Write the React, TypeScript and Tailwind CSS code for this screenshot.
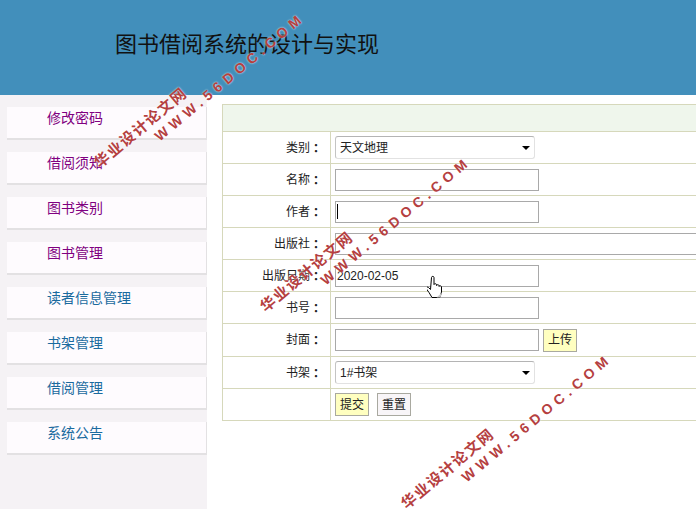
import React from "react";

const CJK = "font-['Liberation_Sans','Noto_Sans_CJK_SC',sans-serif]";

const MENU = [
  { label: "修改密码", color: "text-[#800080]" },
  { label: "借阅须知", color: "text-[#800080]" },
  { label: "图书类别", color: "text-[#800080]" },
  { label: "图书管理", color: "text-[#800080]" },
  { label: "读者信息管理", color: "text-[#1a6a9e]" },
  { label: "书架管理", color: "text-[#1a6a9e]" },
  { label: "借阅管理", color: "text-[#1a6a9e]" },
  { label: "系统公告", color: "text-[#1a6a9e]" },
];

function Row({ label, tall, children }: { label?: string; tall?: boolean; children?: React.ReactNode }) {
  return (
    <div className={`flex border-b border-[#d6d8bb] ${tall ? "h-[33px]" : "h-[32px]"}`}>
      <div className="flex w-[108px] shrink-0 items-center justify-end border-r border-[#d6d8bb] pr-[8px] text-[12px] text-[#222]">
        {label}
        {label && <span className="font-['Noto_Sans_CJK_TC',sans-serif] font-bold">：</span>}
      </div>
      <div className="flex flex-1 items-center gap-[4px] pl-[4px]">{children}</div>
    </div>
  );
}

function TextInput({ value, wide, caret }: { value?: string; wide?: boolean; caret?: boolean }) {
  return (
    <div
      className={`flex h-[22px] shrink-0 items-center border border-[#a9a9a9] bg-white pl-[1px] text-[12px] text-[#222] ${
        wide ? "w-[400px]" : "w-[204px]"
      }`}
    >
      {caret && <span className="h-[15px] w-[1px] bg-black" />}
      {value}
    </div>
  );
}

function SelectBox({ value }: { value: string }) {
  return (
    <div className="relative flex h-[23px] w-[200px] items-center rounded-[3px] border border-[#e2e2e2] border-l-[#c4c4c4] border-t-[#b4b4b4] bg-white pl-[4px] text-[12px] text-[#222]">
      {value}
      <span className="absolute right-[4px] top-[9px] h-0 w-0 border-x-[4px] border-t-[4px] border-x-transparent border-t-black" />
    </div>
  );
}

function Btn({ label, plain }: { label: string; plain?: boolean }) {
  return (
    <div
      className={`flex h-[23px] w-[34px] items-center justify-center border border-[#a9a9a0] text-[12px] text-[#222] ${
        plain ? "ml-[4px] bg-[#f8f5f8]" : "bg-[#ffffc0]"
      }`}
    >
      {label}
    </div>
  );
}

function Watermark({ line1, line2 }: { line1: string; line2: string }) {
  return (
    <>
      <div className={`pointer-events-none absolute -translate-x-1/2 -translate-y-1/2 rotate-[-40deg] whitespace-nowrap text-[15px] font-bold tracking-[1.5px] text-[#b5403f] [text-shadow:0_0_2px_#fff] ${line1}`}>
        华业设计论文网
      </div>
      <div className={`pointer-events-none absolute -translate-x-1/2 -translate-y-1/2 rotate-[-40deg] whitespace-nowrap text-[14px] font-bold tracking-[5px] text-[#b5403f] [text-shadow:0_0_2px_#fff] ${line2}`}>
        WWW.56DOC.COM
      </div>
    </>
  );
}

export default function App() {
  return (
    <div className={`relative h-[509px] w-[696px] overflow-hidden bg-white ${CJK}`}>
      <header className="flex h-[95px] items-center bg-[#428fbb] pb-[6px] pl-[115px] text-[22px] text-[#111]">
        图书借阅系统的设计与实现
      </header>

      <div className="flex h-[414px]">
        <aside className="w-[207px] shrink-0 bg-[#f5f2f5] pl-[7px] pt-[12px]">
          {MENU.map((item) => (
            <div
              key={item.label}
              className={`mb-[12px] h-[33px] border-b-2 border-r border-[#e3e1e3] bg-[#fefbfe] pl-[40px] pt-[1px] text-[14px] leading-[20px] ${item.color}`}
            >
              {item.label}
            </div>
          ))}
        </aside>

        <main className="w-[489px] shrink-0 pl-[15px] pt-[9px]">
          <div className="w-[500px] border-l border-t border-[#d6d8bb]">
            <div className="h-[27px] border-b border-[#d6d8bb] bg-[#eff6ec]" />
            <Row label="类别"><SelectBox value="天文地理" /></Row>
            <Row label="名称"><TextInput /></Row>
            <Row label="作者"><TextInput caret /></Row>
            <Row label="出版社"><TextInput wide /></Row>
            <Row label="出版日期"><TextInput value="2020-02-05" /></Row>
            <Row label="书号"><TextInput /></Row>
            <Row label="封面" tall><TextInput /><Btn label="上传" /></Row>
            <Row label="书架"><SelectBox value="1#书架" /></Row>
            <Row>
              <Btn label="提交" />
              <Btn label="重置" plain />
            </Row>
          </div>
        </main>
      </div>

      {/* mouse pointer */}
      <svg className="absolute left-[427px] top-[275px]" width="18" height="24" viewBox="0 0 18 24">
        <path
          d="M4.5 2.5c0-1.5 2.5-1.5 2.5 0v7c0-1 2.5-1 2.5 0v1c0-1 2.5-1 2.5 0v1c0-1 2.5-1 2.5 .5 v5l-1.5 5.5h-8l-3-5-2.5-3.5c-.8-1.5 1-2.5 2-1.5l2 2z"
          fill="#fff"
          stroke="#000"
          strokeWidth="1"
        />
        <path d="M15 17.5v-.5l-1.5 5.5h-4z" fill="#c8c8c8" />
      </svg>

      <Watermark line1="left-[141px] top-[128px]" line2="left-[230px] top-[77px]" />
      <Watermark line1="left-[307px] top-[272px]" line2="left-[396px] top-[221px]" />
      <Watermark line1="left-[448px] top-[469px]" line2="left-[537px] top-[418px]" />
    </div>
  );
}
